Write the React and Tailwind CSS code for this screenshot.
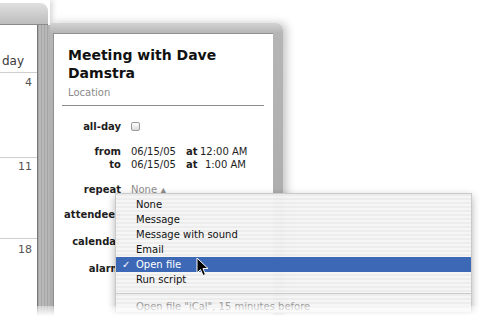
import React from 'react';

const menuItems = [
  { label: 'None' },
  { label: 'Message' },
  { label: 'Message with sound' },
  { label: 'Email' },
  { label: 'Open file', checked: true },
  { label: 'Run script' },
];

const Row = ({ label, top, children }) => (
  <div className={`flex h-[13px] leading-[13px] text-[10px] ${top}`}>
    <div className="w-[67px] shrink-0 text-right font-bold text-[#1e1e1e] whitespace-nowrap">{label}</div>
    <div className="ml-[10px] flex items-center text-[#1e1e1e] whitespace-nowrap">{children}</div>
  </div>
);

const DateTime = ({ date, time }) => (
  <>
    <span className="w-[55px]">{date}</span>
    <span className="w-[14px] font-bold">at</span>
    <span className="w-[46px] text-right">{time}</span>
  </>
);

const Cursor = () => (
  <svg width="13" height="20" viewBox="0 0 13 20" className="absolute left-[196px] top-[257px]">
    <path d="M1 1 L1 16 L4.5 12.5 L7 18.5 L9.5 17.5 L7 11.5 L12 11.5 Z" fill="#000" stroke="#fff" strokeWidth="1" strokeLinejoin="round" />
  </svg>
);

export default function App() {
  return (
    <div className="w-[480px] h-[316px] relative overflow-hidden bg-white flex font-['DejaVu_Sans',sans-serif]">
      {/* Calendar window edge */}
      <div className="w-[50px] shrink-0 flex flex-col pt-[3px] shadow-[2px_0_6px_rgba(0,0,0,0.18)]">
        <div className="h-[22px] mr-[2px] rounded-tr-[8px] bg-gradient-to-b from-[#e0e0e0] to-[#bdbdbd] border-b border-[#8a8a8a]" />
        <div className="flex flex-1">
          <div className="w-[38px] bg-white border-r border-[#777] flex flex-col text-[#3a3a3a]">
            <div className="h-[48px] border-b border-[#cfcfcf] flex items-end justify-end pr-[13px] pb-[4px]">
              <span className="text-[12px] leading-[14px] whitespace-nowrap">day</span>
            </div>
            <div className="h-[85px] border-b border-[#cfcfcf] text-right pr-[5px] pt-[3px] text-[11px] leading-[13px] text-[#555]">4</div>
            <div className="h-[81px] border-b border-[#cfcfcf] text-right pr-[5px] pt-[2px] text-[11px] leading-[13px] text-[#555]">11</div>
            <div className="flex-1 text-right pr-[5px] pt-[4px] text-[11px] leading-[13px] text-[#555]">18</div>
          </div>
          <div className="flex-1 bg-[repeating-linear-gradient(90deg,#a6a6a6_0px,#a6a6a6_1px,#b9b9b9_1px,#b9b9b9_3px)]" />
        </div>
      </div>

      {/* Info drawer */}
      <div className="mt-[23px] w-[233px] shrink-0 pt-[10px] pr-[10px] pl-[3px] rounded-tr-[7px] bg-[linear-gradient(to_bottom,#d3d3d3,#b5b5b5_10px,#a9a9a9)] shadow-[4px_0_8px_rgba(0,0,0,0.22)]">
        <div className="h-full bg-white border-t border-l border-[#909090]">
          <div className="pl-[14px] pt-[12px] pr-[8px]">
            <div className="text-[14px] leading-[18px] font-bold text-[#111]">
              Meeting with Dave<br />Damstra
            </div>
            <div className="mt-[4px] text-[10px] leading-[14px] text-[#8a8a8a]">Location</div>
          </div>
          <div className="mt-[5px] ml-[8px] mr-[9px] h-px bg-[#8c8c8c]" />

          <Row label="all-day" top="mt-[14px]">
            <span className="w-[9px] h-[9px] rounded-[2px] border border-[#9a9a9a] bg-gradient-to-b from-white to-[#dcdcdc]" />
          </Row>
          <Row label="from" top="mt-[12px]">
            <DateTime date="06/15/05" time="12:00 AM" />
          </Row>
          <Row label="to" top="mt-0">
            <DateTime date="06/15/05" time="1:00 AM" />
          </Row>
          <Row label="repeat" top="mt-[12px]">
            <span className="text-[#8e8e8e]">None <span className="text-[8px]">▲</span></span>
          </Row>
          <Row label="attendees" top="mt-[12px]" />
          <Row label="calendar" top="mt-[14px]" />
          <Row label="alarm" top="mt-[14px]" />
        </div>
      </div>

      {/* Alarm popup menu */}
      <div className="absolute left-[115px] top-[193px] w-[357px] h-[120px] pt-[3px] text-[10px] bg-[repeating-linear-gradient(0deg,rgba(236,236,236,0.97)_0px,rgba(236,236,236,0.97)_2px,rgba(245,245,245,0.97)_2px,rgba(245,245,245,0.97)_4px)] border border-[#c9c9c9] shadow-[0_3px_8px_rgba(0,0,0,0.3)] overflow-hidden">
        {menuItems.map((item) => (
          <div
            key={item.label}
            className={`flex h-[15px] leading-[15px] ${item.checked ? 'bg-[#3d68b6] text-white' : 'text-[#111]'}`}
          >
            <span className="w-[20px] pl-[6px]">{item.checked ? '✓' : ''}</span>
            <span>{item.label}</span>
          </div>
        ))}
        <div className="h-[12px] flex items-center">
          <div className="w-full h-px bg-[#cacaca]" />
        </div>
        <div className="flex h-[15px] leading-[15px] text-[#9a9a9a]">
          <span className="w-[20px]" />
          <span>Open file "iCal", 15 minutes before</span>
        </div>
      </div>

      <Cursor />

      {/* bottom fade */}
      <div className="absolute left-0 right-0 top-[306px] h-[10px] bg-gradient-to-b from-[rgba(255,255,255,0.4)] to-white" />
    </div>
  );
}
